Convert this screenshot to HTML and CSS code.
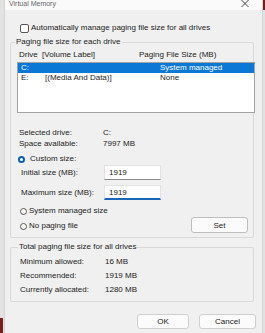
FILE: index.html
```html
<!DOCTYPE html>
<html lang="en">

<head>
    <meta charset="UTF-8">
    <meta name="viewport" content="width=device-width, initial-scale=1.0">
    <title>Virtual Memory</title>
    <link rel="stylesheet" href="styles.css">
</head>

<body>

    <div class="window">
        <div class="titlebar">
            <span class="title">Virtual Memory</span>
            <svg class="close" width="10" height="8" viewBox="0 0 10 8">
                <path d="M1.5 0 L8.5 7 M8.5 0 L1.5 7" stroke="#444" stroke-width="1" fill="none"/>
            </svg>
        </div>

        <div class="content">
            <div class="check-row">
                <span class="checkbox"></span>
                <span>Automatically manage paging file size for all drives</span>
            </div>

            <fieldset class="group group-drive">
                <legend>Paging file size for each drive</legend>

                <div class="list-head">
                    <span class="head-drive">Drive&nbsp; [Volume Label]</span>
                    <span>Paging File Size (MB)</span>
                </div>

                <div class="listbox">
                    <div class="list-row selected">
                        <span>C:</span>
                        <span></span>
                        <span>System managed</span>
                    </div>
                    <div class="list-row">
                        <span>E:</span>
                        <span>[(Media And Data)]</span>
                        <span>None</span>
                    </div>
                </div>

                <div class="info">
                    <div class="info-row"><span class="info-label">Selected drive:</span><span>C:</span></div>
                    <div class="info-row"><span class="info-label">Space available:</span><span>7997 MB</span></div>
                </div>

                <div class="radio-row custom">
                    <span class="radio checked"></span>
                    <span>Custom size:</span>
                </div>

                <div class="field-row">
                    <span class="field-label">Initial size (MB):</span>
                    <span class="input">1919</span>
                </div>
                <div class="field-row">
                    <span class="field-label">Maximum size (MB):</span>
                    <span class="input focused">1919</span>
                </div>

                <div class="bottom-row">
                    <div class="radios">
                        <div class="radio-row">
                            <span class="radio"></span>
                            <span>System managed size</span>
                        </div>
                        <div class="radio-row">
                            <span class="radio"></span>
                            <span>No paging file</span>
                        </div>
                    </div>
                    <button class="btn btn-set">Set</button>
                </div>
            </fieldset>

            <fieldset class="group group-total">
                <legend>Total paging file size for all drives</legend>
                <div class="total-row"><span class="total-label">Minimum allowed:</span><span>16 MB</span></div>
                <div class="total-row"><span class="total-label">Recommended:</span><span>1919 MB</span></div>
                <div class="total-row"><span class="total-label">Currently allocated:</span><span>1280 MB</span></div>
            </fieldset>

            <div class="actions">
                <button class="btn btn-ok">OK</button>
                <button class="btn btn-cancel">Cancel</button>
            </div>
        </div>
    </div>

</body>

</html>
```

FILE: styles.css
```css
* {
    box-sizing: border-box;
}

html, body {
    height: 100%;
}

body {
    margin: 0;
    font-family: "Liberation Sans", Arial, sans-serif;
    font-size: 8px;
    color: #222;
    background:
        linear-gradient(#7b1c1c, #7b1c1c) no-repeat right top / 2px 10px,
        linear-gradient(#7b1c1c, #7b1c1c) no-repeat left bottom / 3px 15px,
        #e2e2e2;
    overflow: hidden;
}

.window {
    margin-left: 4px;
    width: 259px;
    height: 100%;
    background: #f0f0f0;
    border-left: 1px solid #d4d4d4;
    border-right: 1px solid #d4d4d4;
}

/* title bar, the top of it is off screen */
.titlebar {
    height: 10px;
    background: #fafafa;
    display: flex;
    align-items: flex-start;
    justify-content: space-between;
    padding: 0 12px 0 4px;
}

.title {
    font-size: 7px;
    line-height: 8px;
    color: #666;
}

.content {
    padding: 0 8px 0 5px;
}

.check-row {
    display: flex;
    align-items: center;
    height: 10px;
    margin: 13px 0 4px 10px;
    line-height: 10px;
}

.checkbox {
    width: 9px;
    height: 9px;
    border: 1px solid #555;
    border-radius: 2px;
    background: #fff;
    margin-right: 2px;
}

.group {
    margin: 0;
    border: 1px solid #d9d9d9;
    border-radius: 2px;
    min-width: 0;
}

.group legend {
    padding: 0 1px;
    margin-left: -2px;
    line-height: 10px;
}

.group-drive {
    padding: 3px 0 4px 6px;
}

.list-head {
    display: flex;
    line-height: 10px;
    padding-left: 2px;
}

.head-drive {
    width: 120px;
}

.listbox {
    margin-top: 2px;
    height: 51px;
    margin-right: -2px;
    background: #fff;
    border: 1px solid #a3a3a3;
}

.list-row {
    display: grid;
    grid-template-columns: 24px 115px 1fr;
    line-height: 10px;
    padding-left: 3px;
}

.list-row.selected {
    background: #0a78d4;
    color: #fff;
}

.info {
    margin-top: 14px;
    padding-left: 2px;
}

.info-row {
    display: flex;
    line-height: 11px;
}

.info-label {
    width: 84px;
}

.radio-row {
    display: flex;
    align-items: center;
    height: 10px;
    line-height: 10px;
}

.radio {
    width: 7px;
    height: 7px;
    border: 1px solid #555;
    border-radius: 50%;
    background: #fff;
    margin-right: 2px;
}

.radio.checked {
    border: 2px solid #0a5fb4;
}

.custom {
    margin-top: 5px;
    padding-left: 1px;
}

.custom .radio {
    margin-right: 5px;
}

.field-row {
    display: flex;
    align-items: center;
    margin-top: 1px;
    padding-left: 4px;
}

.field-row + .field-row {
    margin-top: 5px;
}

.field-label {
    width: 83px;
}

.input {
    width: 57px;
    height: 15px;
    line-height: 13px;
    padding-left: 4px;
    background: #fff;
    border: 1px solid #e2e2e2;
    border-bottom-color: #8a8a8a;
}

.input.focused {
    border-bottom: 2px solid #1a67b8;
}

.bottom-row {
    display: flex;
    justify-content: space-between;
    margin-top: 6px;
    padding: 0 5px 0 3px;
}

.radios .radio-row + .radio-row {
    margin-top: 5px;
}

.btn {
    font-family: inherit;
    font-size: 8px;
    color: #222;
    background: #fbfbfb;
    border: 1px solid #cfcfcf;
    border-radius: 3px;
    padding: 0;
    height: 16px;
}

.btn-set {
    width: 57px;
    margin-top: 11px;
    border-color: #bdbdbd;
}

.group-total {
    margin-top: 4px;
    padding: 3px 0 4px 9px;
}

.total-row {
    display: flex;
    line-height: 14px;
}

.total-label {
    width: 85px;
}

.actions {
    display: flex;
    justify-content: flex-end;
    gap: 10px;
    margin: 12px -2px 0 0;
}

.actions .btn {
    height: 15px;
}

.btn-ok {
    width: 52px;
}

.btn-cancel {
    width: 57px;
}
```
